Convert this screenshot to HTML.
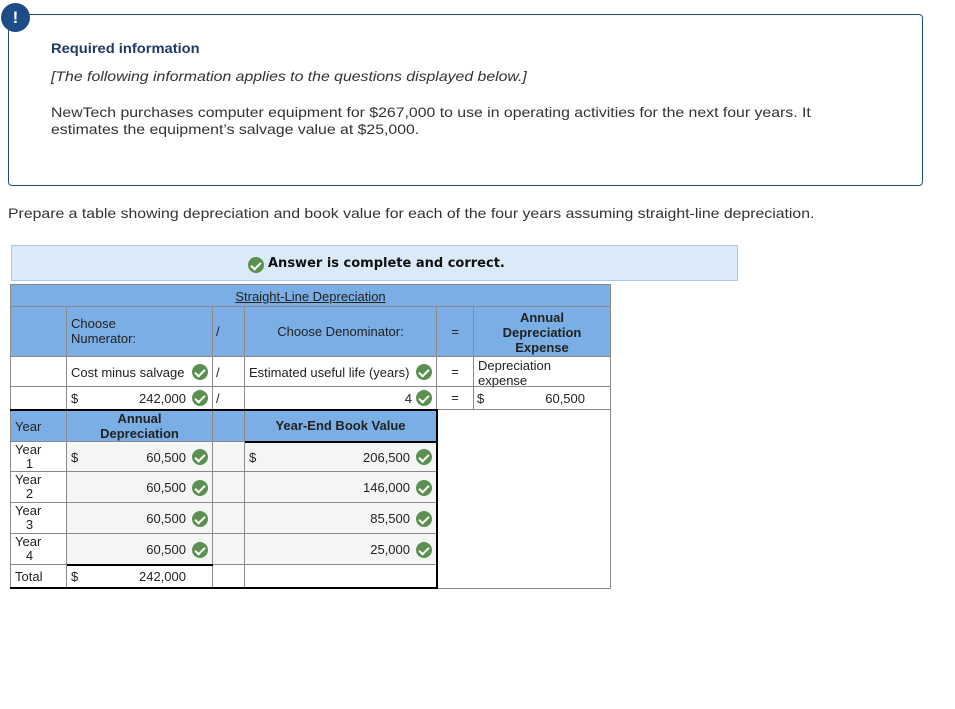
<!DOCTYPE html>
<html><head><meta charset="utf-8"><style>
body{margin:0;width:955px;height:709px;background:#fff;position:relative;font-family:"Liberation Sans",Arial,sans-serif;overflow:hidden}
.a{position:absolute}
.c{position:absolute;box-sizing:border-box;border-right:1px solid #8a8a8a;border-bottom:1px solid #8a8a8a;font-size:13px;color:#222;}
.b{background:#7aaee4}
.g{background:#f4f6f4}
.ck{position:absolute;width:16px;height:16px;border-radius:50%;background:#5a9150}
.ck:after{content:"";position:absolute;left:5px;top:2.5px;width:4px;height:8px;border:solid #fff;border-width:0 2px 2px 0;transform:rotate(45deg)}
.t{position:absolute;white-space:nowrap}
.sx{transform:scaleX(1.13);transform-origin:0 0}
</style></head><body>
<div class="a" style="left:8px;top:14px;width:913px;height:170px;border:1px solid #1d4e85;border-radius:4px"></div>
<div class="a" style="left:1px;top:3px;width:29px;height:29px;border-radius:50%;background:#1d4c87;color:#fff;font-weight:bold;font-size:17px;text-align:center;line-height:29px">!</div>
<div class="t" style="left:51px;top:40px;font-size:14px;font-weight:bold;color:#1e3a66;transform:scaleX(1.05);transform-origin:0 0">Required information</div>
<div class="t sx" style="left:51px;top:68px;font-size:14px;font-style:italic;color:#333">[The following information applies to the questions displayed below.]</div>
<div class="t sx" style="left:51px;top:104px;font-size:14px;color:#333;line-height:17px">NewTech purchases computer equipment for $267,000 to use in operating activities for the next four years. It<br>estimates the equipment’s salvage value at $25,000.</div>
<div class="t sx" style="left:8px;top:205px;font-size:14px;color:#333">Prepare a table showing depreciation and book value for each of the four years assuming straight-line depreciation.</div>

<div class="a" style="left:11px;top:245px;width:725px;height:34px;background:#dbeaf8;border:1px solid #a8c8e8"></div>
<div class="ck" style="left:248px;top:257px"></div>
<div class="t" style="left:268px;top:256px;font-family:'DejaVu Sans',Verdana,sans-serif;font-weight:bold;font-size:13px;color:#111">Answer is complete and correct.</div>

<div class="a" style="left:10px;top:284px;width:601px;height:305px;box-sizing:border-box;border:1px solid #8a8a8a"></div>
<div class="c b" style="left:10px;top:284px;width:601px;height:23px;border-left:1px solid #8a8a8a;border-top:1px solid #8a8a8a;text-align:center;line-height:23px;font-size:13px;"><span style="text-decoration:underline">Straight-Line Depreciation</span></div>
<div class="c b" style="left:10px;top:307px;width:57px;height:50px;border-left:1px solid #8a8a8a"></div>
<div class="c b" style="left:67px;top:307px;width:146px;height:50px;padding:9px 0 0 4px;line-height:15px">Choose<br>Numerator:</div>
<div class="c b" style="left:213px;top:307px;width:32px;height:50px;padding:17px 0 0 3px">/</div>
<div class="c b" style="left:245px;top:307px;width:192px;height:50px;text-align:center;line-height:49px">Choose Denominator:</div>
<div class="c b" style="left:437px;top:307px;width:37px;height:50px;text-align:center;line-height:49px">=</div>
<div class="c b" style="left:474px;top:307px;width:137px;height:50px;text-align:center;font-weight:bold;line-height:15px;padding-top:3px">Annual<br>Depreciation<br>Expense</div>
<div class="c" style="left:10px;top:357px;width:57px;height:30px;border-left:1px solid #8a8a8a"></div>
<div class="c" style="left:67px;top:357px;width:146px;height:30px;padding:8px 0 0 4px">Cost minus salvage</div><div class="ck" style="left:192px;top:364px"></div>
<div class="c" style="left:213px;top:357px;width:32px;height:30px;padding:8px 0 0 3px">/</div>
<div class="c" style="left:245px;top:357px;width:192px;height:30px;padding:8px 0 0 4px">Estimated useful life (years)</div><div class="ck" style="left:416px;top:364px"></div>
<div class="c" style="left:437px;top:357px;width:37px;height:30px;text-align:center;line-height:30px">=</div>
<div class="c" style="left:474px;top:357px;width:137px;height:30px;padding:1px 0 0 4px;line-height:15px">Depreciation<br>expense</div>
<div class="c" style="left:10px;top:387px;width:57px;height:23px;border-left:1px solid #8a8a8a"></div>
<div class="c" style="left:67px;top:387px;width:146px;height:23px;padding:4px 0 0 4px">$<span class="t" style="right:26px;top:4px">242,000</span></div><div class="ck" style="left:192px;top:390px"></div>
<div class="c" style="left:213px;top:387px;width:32px;height:23px;padding:4px 0 0 3px">/</div>
<div class="c" style="left:245px;top:387px;width:192px;height:23px"><span class="t" style="right:24px;top:4px">4</span></div><div class="ck" style="left:416px;top:390px"></div>
<div class="c" style="left:437px;top:387px;width:37px;height:23px;text-align:center;line-height:22px">=</div>
<div class="c" style="left:474px;top:387px;width:137px;height:23px;padding:4px 0 0 3px">$<span class="t" style="right:25px;top:4px">60,500</span></div>
<div class="c b" style="left:10px;top:410px;width:57px;height:32px;padding:9px 0 0 4px;border-left:1px solid #8a8a8a">Year</div>
<div class="c b" style="left:67px;top:410px;width:146px;height:32px;text-align:center;font-weight:bold;line-height:15px;padding-top:1px">Annual<br>Depreciation</div>
<div class="c b" style="left:213px;top:410px;width:32px;height:32px"></div>
<div class="c b" style="left:245px;top:410px;width:192px;height:32px;text-align:center;line-height:31px;font-weight:bold">Year-End Book Value</div>

<div class="c" style="left:10px;top:442px;width:57px;height:30px;border-left:1px solid #8a8a8a;padding:1px 0 0 4px;line-height:14px">Year<br>&nbsp;&nbsp;&nbsp;1</div>
<div class="c g" style="left:67px;top:442px;width:146px;height:30px;padding:8px 0 0 4px">$<span class="t" style="right:26px;top:8px">60,500</span></div><div class="ck" style="left:192px;top:449px"></div>
<div class="c g" style="left:213px;top:442px;width:32px;height:30px"></div>
<div class="c g" style="left:245px;top:442px;width:192px;height:30px;padding:8px 0 0 4px">$<span class="t" style="right:26px;top:8px">206,500</span></div><div class="ck" style="left:416px;top:449px"></div>

<div class="c" style="left:10px;top:472px;width:57px;height:31px;border-left:1px solid #8a8a8a;padding:1px 0 0 4px;line-height:14px">Year<br>&nbsp;&nbsp;&nbsp;2</div>
<div class="c g" style="left:67px;top:472px;width:146px;height:31px"><span class="t" style="right:26px;top:8px">60,500</span></div><div class="ck" style="left:192px;top:480px"></div>
<div class="c g" style="left:213px;top:472px;width:32px;height:31px"></div>
<div class="c g" style="left:245px;top:472px;width:192px;height:31px"><span class="t" style="right:26px;top:8px">146,000</span></div><div class="ck" style="left:416px;top:480px"></div>

<div class="c" style="left:10px;top:503px;width:57px;height:31px;border-left:1px solid #8a8a8a;padding:1px 0 0 4px;line-height:14px">Year<br>&nbsp;&nbsp;&nbsp;3</div>
<div class="c g" style="left:67px;top:503px;width:146px;height:31px"><span class="t" style="right:26px;top:8px">60,500</span></div><div class="ck" style="left:192px;top:511px"></div>
<div class="c g" style="left:213px;top:503px;width:32px;height:31px"></div>
<div class="c g" style="left:245px;top:503px;width:192px;height:31px"><span class="t" style="right:26px;top:8px">85,500</span></div><div class="ck" style="left:416px;top:511px"></div>

<div class="c" style="left:10px;top:534px;width:57px;height:31px;border-left:1px solid #8a8a8a;padding:1px 0 0 4px;line-height:14px">Year<br>&nbsp;&nbsp;&nbsp;4</div>
<div class="c g" style="left:67px;top:534px;width:146px;height:31px"><span class="t" style="right:26px;top:8px">60,500</span></div><div class="ck" style="left:192px;top:542px"></div>
<div class="c g" style="left:213px;top:534px;width:32px;height:31px"></div>
<div class="c g" style="left:245px;top:534px;width:192px;height:31px"><span class="t" style="right:26px;top:8px">25,000</span></div><div class="ck" style="left:416px;top:542px"></div>

<div class="c" style="left:10px;top:565px;width:57px;height:23px;border-left:1px solid #8a8a8a;padding:4px 0 0 4px">Total</div>
<div class="c" style="left:67px;top:565px;width:146px;height:23px;padding:4px 0 0 4px">$<span class="t" style="right:26px;top:4px">242,000</span></div>
<div class="c" style="left:213px;top:565px;width:32px;height:23px"></div>
<div class="c" style="left:245px;top:565px;width:192px;height:23px"></div>

<div class="a" style="left:10px;top:409px;width:428px;height:2px;background:#000"></div>
<div class="a" style="left:436px;top:409px;width:2px;height:180px;background:#000"></div>
<div class="a" style="left:10px;top:587px;width:428px;height:2px;background:#000"></div>
<div class="a" style="left:67px;top:564px;width:146px;height:2px;background:#000"></div>
<div class="a" style="left:245px;top:441px;width:192px;height:2px;background:#000"></div>
</body></html>
